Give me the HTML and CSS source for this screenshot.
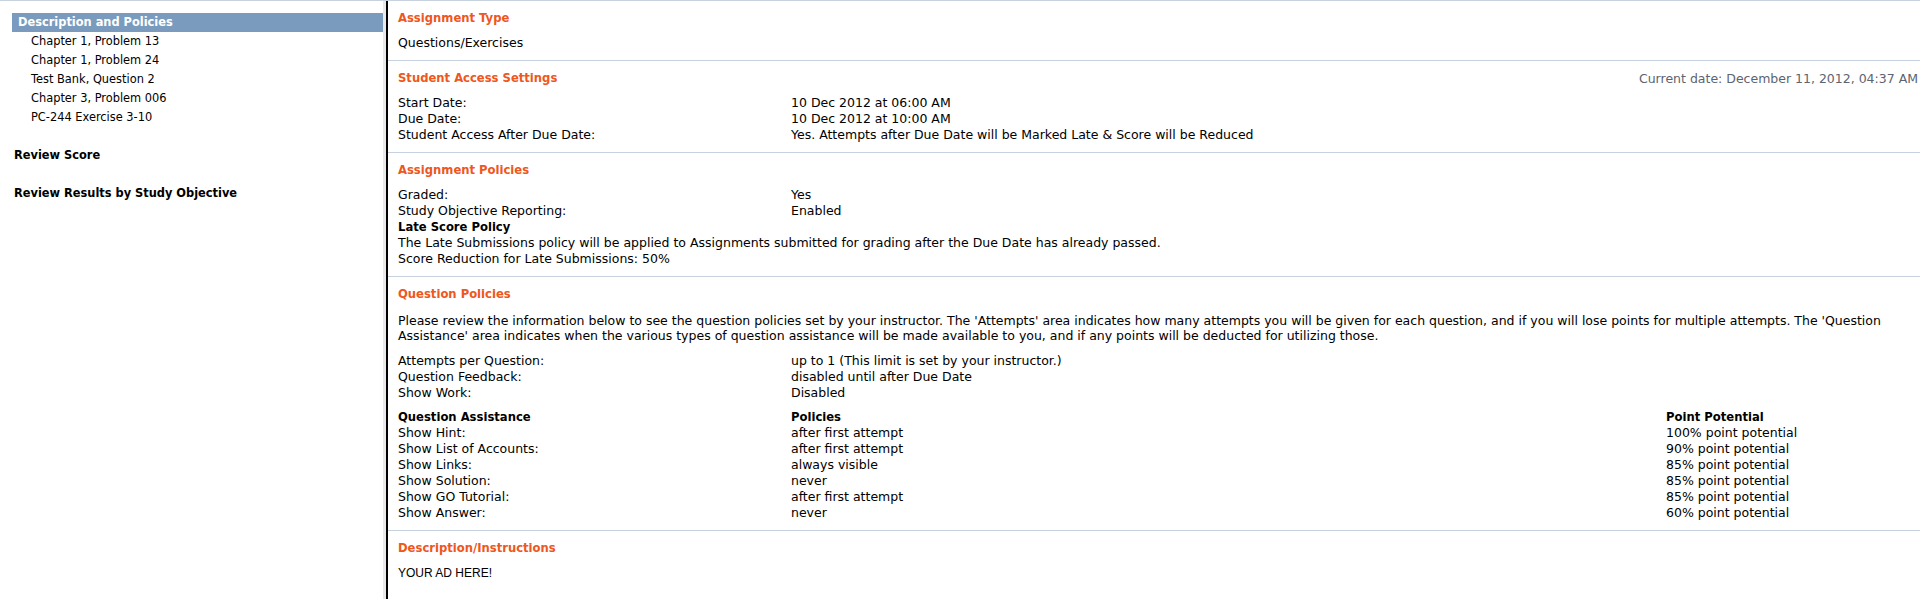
FILE: index.html
```html
<!DOCTYPE html>
<html>
<head>
<meta charset="utf-8">
<title>Description and Policies</title>
<link rel="stylesheet" href="styles.css">
</head>
<body>
<div class="page">
  <nav class="sidebar">
    <div class="nav-current">Description and Policies</div>
    <ul class="nav-items">
      <li>Chapter 1, Problem 13</li>
      <li>Chapter 1, Problem 24</li>
      <li>Test Bank, Question 2</li>
      <li>Chapter 3, Problem 006</li>
      <li>PC-244 Exercise 3-10</li>
    </ul>
    <div class="nav-link">Review Score</div>
    <div class="nav-link">Review Results by Study Objective</div>
  </nav>
  <main class="content">
    <section class="section">
      <div class="sec-head"><h2>Assignment Type</h2></div>
      <div class="rows two"><div>Questions/Exercises</div></div>
    </section>
    <section class="section">
      <div class="sec-head"><h2>Student Access Settings</h2><span class="current-date">Current date: December 11, 2012, 04:37 AM</span></div>
      <div class="rows two">
        <div>Start Date:</div><div>10 Dec 2012 at 06:00 AM</div>
        <div>Due Date:</div><div>10 Dec 2012 at 10:00 AM</div>
        <div>Student Access After Due Date:</div><div>Yes. Attempts after Due Date will be Marked Late &amp; Score will be Reduced</div>
      </div>
    </section>
    <section class="section">
      <div class="sec-head"><h2>Assignment Policies</h2></div>
      <div class="rows two">
        <div>Graded:</div><div>Yes</div>
        <div>Study Objective Reporting:</div><div>Enabled</div>
      </div>
      <div class="late">
        <div class="bold">Late Score Policy</div>
        <div>The Late Submissions policy will be applied to Assignments submitted for grading after the Due Date has already passed.</div>
        <div>Score Reduction for Late Submissions: 50%</div>
      </div>
    </section>
    <section class="section">
      <div class="sec-head"><h2>Question Policies</h2></div>
      <p class="intro">Please review the information below to see the question policies set by your instructor. The 'Attempts' area indicates how many attempts you will be given for each question, and if you will lose points for multiple attempts. The 'Question Assistance' area indicates when the various types of question assistance will be made available to you, and if any points will be deducted for utilizing those.</p>
      <div class="rows two">
        <div>Attempts per Question:</div><div>up to 1 (This limit is set by your instructor.)</div>
        <div>Question Feedback:</div><div>disabled until after Due Date</div>
        <div>Show Work:</div><div>Disabled</div>
      </div>
      <div class="rows three assist">
        <div class="bold">Question Assistance</div><div class="bold">Policies</div><div class="bold">Point Potential</div>
        <div>Show Hint:</div><div>after first attempt</div><div>100% point potential</div>
        <div>Show List of Accounts:</div><div>after first attempt</div><div>90% point potential</div>
        <div>Show Links:</div><div>always visible</div><div>85% point potential</div>
        <div>Show Solution:</div><div>never</div><div>85% point potential</div>
        <div>Show GO Tutorial:</div><div>after first attempt</div><div>85% point potential</div>
        <div>Show Answer:</div><div>never</div><div>60% point potential</div>
      </div>
    </section>
    <section class="section last">
      <div class="sec-head"><h2>Description/Instructions</h2></div>
      <div class="ad">YOUR AD HERE!</div>
    </section>
  </main>
</div>
</body>
</html>
```
FILE: styles.css
```css
html, body {
  margin: 0;
  padding: 0;
  background: #ffffff;
}
body {
  font-family: Verdana, "DejaVu Sans", sans-serif;
  font-size: 12.5px;
  color: #000000;
  border-top: 1px solid #c8d2df;
}
.page {
  display: flex;
  min-height: 598px;
}
.sidebar {
  width: 371px;
  padding: 12px 0 0 12px;
  border-right: 3px solid #e9e9e9;
  flex: none;
  font-size: 11.4px;
}
.nav-current {
  background: #7a9bbd;
  color: #ffffff;
  font-weight: bold;
  height: 19px;
  line-height: 19px;
  padding-left: 6px;
}
.nav-items {
  list-style: none;
  margin: 0;
  padding: 0 0 0 19px;
}
.nav-items li {
  line-height: 19px;
}
.nav-link {
  font-weight: bold;
  line-height: 19px;
  margin-top: 19px;
  padding-left: 2px;
}
.content {
  flex: 1;
  border-left: 2px solid #000000;
}
.section {
  padding: 10px 0 9px 10px;
  border-top: 1px solid #c8d2df;
}
.section:first-child {
  border-top: none;
}
.sec-head {
  display: flex;
  justify-content: space-between;
  align-items: center;
  height: 15px;
  margin-bottom: 9px;
}
.sec-head h2 {
  margin: 0;
  font-size: 11.6px;
  line-height: 15px;
  font-weight: bold;
  color: #ef5620;
}
.current-date {
  color: #5d6370;
  line-height: 15px;
  padding-right: 2px;
}
.rows {
  display: grid;
  line-height: 16px;
}
.rows.two {
  grid-template-columns: 393px 1fr;
}
.rows.three {
  grid-template-columns: 393px 875px 1fr;
}
.assist {
  margin-top: 8px;
}
.bold {
  font-weight: bold;
  font-size: 11.6px;
}
.late {
  line-height: 16px;
}
.intro {
  margin: 11px 10px 10px 0;
  line-height: 15px;
}
.ad {
  font-family: Arial, "Liberation Sans", sans-serif;
  font-size: 12px;
  line-height: 16px;
}
```
